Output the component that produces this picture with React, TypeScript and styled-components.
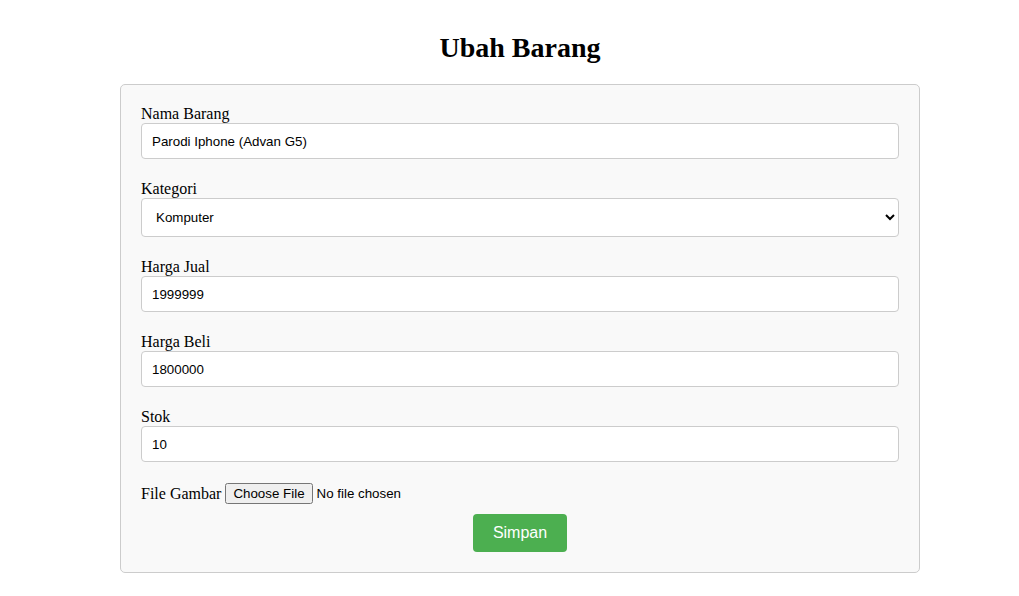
import React from "react";
import styled, { createGlobalStyle } from "styled-components";

const GlobalStyle = createGlobalStyle`
  html, body { margin: 0; padding: 0; background: #ffffff; }
  body { font-family: "Liberation Serif", "Times New Roman", serif; font-size: 16px; color: #000; }
`;

const Page = styled.div`
  padding: 0 0 0 21px;
`;

const Title = styled.h2`
  margin: 32px 0 21px;
  text-align: center;
  font-family: "Liberation Serif", "Times New Roman", serif;
  font-size: 28px;
  font-weight: bold;
  line-height: 31px;
`;

const Card = styled.form`
  box-sizing: border-box;
  width: 800px;
  margin: 0 auto;
  padding: 20px;
  background: #f9f9f9;
  border: 1px solid #cccccc;
  border-radius: 5px;
  display: flex;
  flex-direction: column;
`;

const Field = styled.div`
  display: flex;
  flex-direction: column;
  margin-bottom: 21px;
`;

const Label = styled.label`
  display: block;
  font-size: 16px;
  line-height: 18px;
`;

const TextInput = styled.input`
  box-sizing: border-box;
  width: 100%;
  height: 36px;
  margin: 0;
  padding: 0 10px;
  border: 1px solid #cccccc;
  border-radius: 4px;
  background: #ffffff;
  font-family: "Liberation Sans", Arial, sans-serif;
  font-size: 13.333px;
  color: #000;
  outline: none;
`;

const Select = styled.select`
  box-sizing: border-box;
  width: 100%;
  height: 39px;
  margin: 0;
  padding: 0 10px;
  border: 1px solid #cccccc;
  border-radius: 4px;
  background: #ffffff;
  font-family: "Liberation Sans", Arial, sans-serif;
  font-size: 13.333px;
  color: #000;
  outline: none;
`;

const FileRow = styled.div`
  display: flex;
  align-items: center;
  gap: 4px;
  height: 21px;
  margin-bottom: 10px;
`;

const FileInput = styled.input`
  font-family: "Liberation Sans", Arial, sans-serif;
  font-size: 13.333px;
  margin: 0;
`;

const SubmitButton = styled.button`
  align-self: center;
  box-sizing: border-box;
  height: 38px;
  padding: 0 20px;
  border: none;
  border-radius: 4px;
  background: #4caf50;
  color: #ffffff;
  font-family: "Liberation Sans", Arial, sans-serif;
  font-size: 16px;
  cursor: pointer;
`;

export default function App() {
  return (
    <>
      <GlobalStyle />
      <Page>
        <Title>Ubah Barang</Title>
        <Card onSubmit={(e) => e.preventDefault()}>
          <Field>
            <Label htmlFor="nama">Nama Barang</Label>
            <TextInput id="nama" type="text" defaultValue="Parodi Iphone (Advan G5)" />
          </Field>
          <Field>
            <Label htmlFor="kategori">Kategori</Label>
            <Select id="kategori" defaultValue="Komputer">
              <option value="Komputer">Komputer</option>
              <option value="Elektronik">Elektronik</option>
              <option value="Handphone">Handphone</option>
            </Select>
          </Field>
          <Field>
            <Label htmlFor="jual">Harga Jual</Label>
            <TextInput id="jual" type="text" defaultValue="1999999" />
          </Field>
          <Field>
            <Label htmlFor="beli">Harga Beli</Label>
            <TextInput id="beli" type="text" defaultValue="1800000" />
          </Field>
          <Field>
            <Label htmlFor="stok">Stok</Label>
            <TextInput id="stok" type="text" defaultValue="10" />
          </Field>
          <FileRow>
            <Label htmlFor="gambar">File Gambar</Label>
            <FileInput id="gambar" type="file" />
          </FileRow>
          <SubmitButton type="submit">Simpan</SubmitButton>
        </Card>
      </Page>
    </>
  );
}
